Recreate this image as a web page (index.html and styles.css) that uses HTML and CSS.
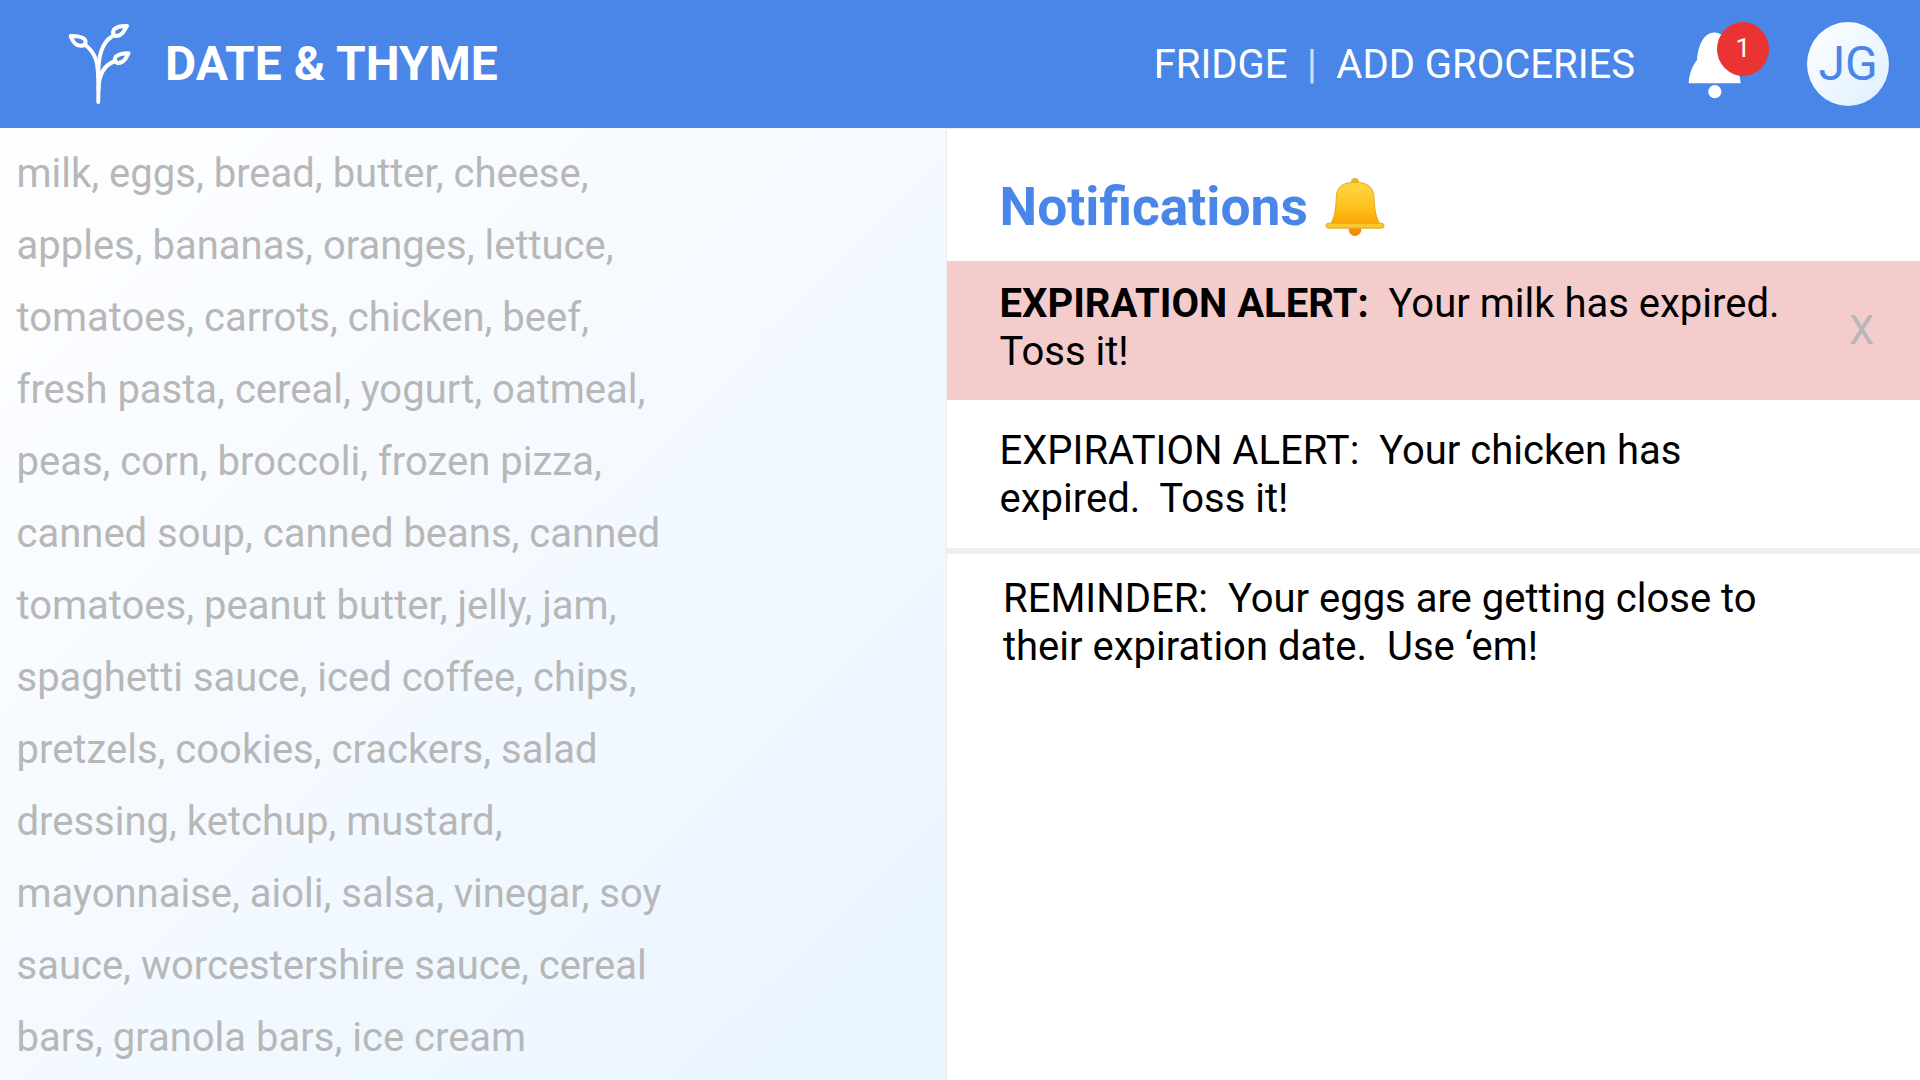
FILE: index.html
```html
<!DOCTYPE html>
<html lang="en">
<head>
<meta charset="utf-8">
<title>Date &amp; Thyme</title>
<link rel="stylesheet" href="styles.css">
</head>
<body>
<div class="page">
  <header class="topbar">
    <svg class="logo" viewBox="0 0 100 110" width="100" height="110" fill="none" stroke="#fff" stroke-width="4" stroke-linecap="round" stroke-linejoin="round">
      <path d="M48.300 92C48.500 76 49 58 46 50Q43 41 36.500 36"/>
      <path d="M48.500 68C47.500 46 53 32 62 26.500"/>
      <path d="M48.500 80C48.500 65 54 55 65 51"/>
      <path d="M20.700 26Q23 33 27.500 35.200Q33 37 35.500 33.500Q36.500 29.500 32 27.500Q27 25.500 20.700 26Z"/>
      <path d="M77 16Q68 15.500 64 19.500Q61.500 23.500 65.500 26Q69.500 26.500 73 22.500Z"/>
      <path d="M78.500 43.200Q70 43 66 46.500Q63 50.500 67.500 53Q71.500 53.500 75 49.500Z"/>
    </svg>
    <h1 class="brand">DATE &amp; THYME</h1>
    <nav class="nav">
      <a class="nav-link">FRIDGE</a>
      <span class="nav-sep">|</span>
      <a class="nav-link">ADD GROCERIES</a>
    </nav>
    <div class="alerts">
      <svg class="alerts-bell" viewBox="0 0 54 68" width="54" height="68" fill="#fff">
        <path d="M0.700 51.200C1 43 4 34 9 28C10 15 15 0.500 26.500 0.500S43 15 44 28C49 34 52 43 52.700 51.200Z"/>
        <circle cx="26.800" cy="59.700" r="6.600"/>
      </svg>
      <span class="badge">1</span>
    </div>
    <div class="avatar">JG</div>
  </header>
  <main class="content">
    <section class="groceries">
      <p class="grocery-text">milk, eggs, bread, butter, cheese,<br>apples, bananas, oranges, lettuce,<br>tomatoes, carrots, chicken, beef,<br>fresh pasta, cereal, yogurt, oatmeal,<br>peas, corn, broccoli, frozen pizza,<br>canned soup, canned beans, canned<br>tomatoes, peanut butter, jelly, jam,<br>spaghetti sauce, iced coffee, chips,<br>pretzels, cookies, crackers, salad<br>dressing, ketchup, mustard,<br>mayonnaise, aioli, salsa, vinegar, soy<br>sauce, worcestershire sauce, cereal<br>bars, granola bars, ice cream</p>
    </section>
    <aside class="panel">
      <div class="panel-head">
        <h2 class="panel-title">Notifications</h2>
        <svg class="gold-bell" viewBox="0 0 60 60" width="60" height="60">
          <defs>
            <linearGradient id="gold" x1="0" y1="0" x2="0" y2="1">
              <stop offset="0.15" stop-color="#fdd33a"/>
              <stop offset="0.6" stop-color="#fec01f"/>
              <stop offset="0.95" stop-color="#ffa602"/>
            </linearGradient>
          </defs>
          <circle cx="30" cy="5" r="3.600" fill="#f3b51d" stroke="#d3a02b" stroke-width="0.800"/>
          <circle cx="30" cy="52.700" r="5.800" fill="#fb8c00" stroke="#df7a08" stroke-width="0.800"/>
          <path d="M5 48C9 42 11 33 11.300 20C11.500 10 18 5.300 30 5.300S48.700 10 49 20C49.300 33 51.500 42 55.500 48Z" fill="url(#gold)" stroke="#dcab2c" stroke-width="1"/>
          <rect x="1" y="46.200" width="58" height="5" rx="2.500" fill="#fbc72e" stroke="#dba52a" stroke-width="0.900"/>
        </svg>
      </div>
      <article class="note note-urgent">
        <p class="note-text"><strong>EXPIRATION ALERT:</strong>&nbsp; Your milk has expired.<br>Toss it!</p>
        <button class="dismiss" type="button">X</button>
      </article>
      <article class="note">
        <p class="note-text">EXPIRATION ALERT:&nbsp; Your chicken has<br>expired.&nbsp; Toss it!</p>
      </article>
      <article class="note note-reminder">
        <p class="note-text">REMINDER:&nbsp; Your eggs are getting close to<br>their expiration date.&nbsp; Use ‘em!</p>
      </article>
    </aside>
  </main>
</div>
</body>
</html>
```
FILE: styles.css
```css
* {
  box-sizing: border-box;
}

body,
h1,
h2,
p {
  margin: 0;
}

body {
  font-family: Roboto, "Liberation Sans", sans-serif;
  font-size: 40px;
  color: #000;
}

.page {
  display: flex;
  flex-direction: column;
  width: 1920px;
  height: 1080px;
  overflow: hidden;
  background: linear-gradient(135deg, #fff, #dfefff);
}

.topbar {
  display: flex;
  align-items: center;
  height: 128px;
  flex: none;
  padding: 0 31px 0 50px;
  background: #4a86e8;
  color: #fff;
}

.logo {
  margin-bottom: -2px;
}

.brand {
  margin-left: 15px;
  font-size: 48px;
  line-height: 56px;
  font-weight: 700;
}

.nav {
  display: flex;
  gap: 19.5px;
  margin-left: auto;
  padding-top: 2px;
  line-height: 48px;
  white-space: nowrap;
}

.nav-sep {
  opacity: 0.75;
}

.alerts {
  position: relative;
  width: 54px;
  height: 68px;
  margin: 3px 0 0 53px;
  line-height: 0;
}

.badge {
  position: absolute;
  left: 29px;
  top: -10px;
  width: 52px;
  height: 54px;
  border-radius: 50%;
  background: #ea3434;
  font-size: 26.667px;
  line-height: 53px;
  text-align: center;
}

.avatar {
  width: 82px;
  height: 84px;
  margin-left: 65px;
  border-radius: 50%;
  background: linear-gradient(135deg, #fff, #ddefff);
  color: #4a86e8;
  font-size: 48px;
  line-height: 84px;
  text-align: center;
}

.content {
  display: flex;
  flex: 1;
}

.groceries {
  width: 946px;
  padding: 10px 0 0 16.5px;
}

.grocery-text {
  line-height: 72px;
  color: #b7b7b7;
  white-space: nowrap;
}

.panel {
  flex: 1;
  border-left: 1px solid #eee;
  border-top: 1px solid #eee;
  background: #fff;
}

.panel-head {
  display: flex;
  gap: 17px;
  height: 132px;
  padding: 47px 0 0 52.5px;
}

.panel-title {
  font-size: 53.333px;
  line-height: 62px;
  font-weight: 700;
  color: #4a86e8;
}

.gold-bell {
  margin-top: 1px;
}

.note {
  display: flex;
  justify-content: space-between;
  height: 148px;
  padding: 27px 46px 0 52.5px;
}

.note-urgent {
  height: 139px;
  padding-top: 19px;
  background: #f4cccc;
}

.note-reminder {
  height: auto;
  padding-left: 56px;
  border-top: 6px solid #eee;
  padding-top: 21px;
}

.note-text {
  line-height: 48px;
  white-space: nowrap;
}

.dismiss {
  align-self: flex-start;
  margin-top: 27px;
  padding: 0;
  border: 0;
  background: none;
  color: #b7b7b7;
  font: inherit;
  line-height: 48px;
}
```
